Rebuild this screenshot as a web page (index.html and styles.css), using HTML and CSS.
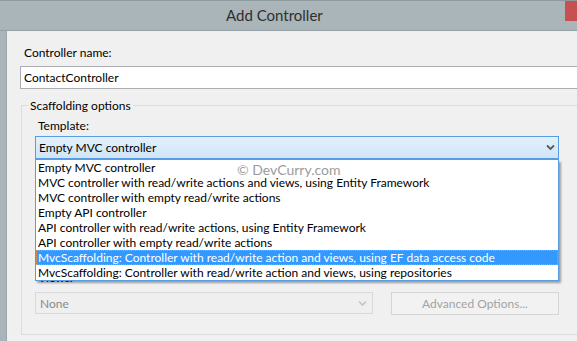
FILE: index.html
```html
<!DOCTYPE html>
<html>
<head>
<meta charset="utf-8">
<link rel="stylesheet" href="styles.css">
</head>
<body>
<div class="window">
  <div class="titlebar">
    <span class="title">Add Controller</span>
    <span class="close"></span>
  </div>
  <div class="content">
    <div class="field-label">Controller name:</div>
    <div class="textbox">ContactController</div>
    <fieldset class="group">
      <legend>Scaffolding options</legend>
      <div class="label">Template:</div>
      <div class="combo-wrap">
        <div class="combo open">
          <span>Empty MVC controller</span>
          <svg class="chev" width="9" height="7" viewBox="0 0 9 7"><polyline points="1,1.5 4.5,5 8,1.5" fill="none" stroke="#5a5a5a" stroke-width="1.8"/></svg>
        </div>
        <ul class="dropdown">
          <li>Empty MVC controller</li>
          <li>MVC controller with read/write actions and views, using Entity Framework</li>
          <li>MVC controller with empty read/write actions</li>
          <li>Empty API controller</li>
          <li>API controller with read/write actions, using Entity Framework</li>
          <li>API controller with empty read/write actions</li>
          <li class="selected">MvcScaffolding: Controller with read/write action and views, using EF data access code</li>
          <li>MvcScaffolding: Controller with read/write action and views, using repositories</li>
        </ul>
        <div class="watermark">© DevCurry.com</div>
      </div>
      <div class="label views">Views:</div>
      <div class="row">
        <div class="combo disabled">
          <span>None</span>
          <svg class="chev" width="9" height="7" viewBox="0 0 9 7"><polyline points="1,1.5 4.5,5 8,1.5" fill="none" stroke="#c4c4c4" stroke-width="1.6"/></svg>
        </div>
        <button class="btn" disabled>Advanced Options...</button>
      </div>
    </fieldset>
  </div>
</div>
</body>
</html>
```

FILE: styles.css
```css
html, body {
  margin: 0;
  padding: 0;
}
body {
  width: 577px;
  height: 341px;
  overflow: hidden;
  font-family: Lato, "Open Sans", sans-serif;
  font-size: 12px;
  color: #000;
  background: #aab5ba;
}
.window {
  height: 341px;
  box-sizing: border-box;
  background: #aab5ba;
  border-top: 1px solid #8e999e;
}
.titlebar {
  height: 29px;
  border-bottom: 1px solid #96a1a6;
  display: flex;
  align-items: flex-start;
}
.title {
  margin-left: 226px;
  margin-top: 5px;
  font-size: 15px;
  line-height: 19px;
  color: #2e2e2e;
}
.close {
  margin-left: auto;
  width: 12px;
  height: 20px;
  background: #c75050;
}
.content {
  margin-left: 6px;
  border-left: 1px solid #9ba6ab;
  background: #f0f0f0;
  width: 640px;
  height: 310px;
  box-sizing: border-box;
  padding: 14px 0 0 13px;
}
.field-label {
  line-height: 15px;
  margin-left: 4px;
}
.textbox {
  margin-top: 6px;
  height: 23px;
  box-sizing: border-box;
  width: 620px;
  background: #fff;
  border: 1px solid #abadb3;
  padding-left: 3px;
  line-height: 21px;
}
.group {
  margin: 9px 0 0 1px;
  padding: 0 30px 19px 13px;
  border: 1px solid #dcdcdc;
  min-inline-size: 0;
  width: 530px;
}
.group legend {
  margin-left: -7px;
  padding: 0 2px;
  line-height: 15px;
}
.label {
  line-height: 15px;
  margin-left: 3px;
}
.group > .label:first-of-type {
  margin-top: 5px;
}
.combo-wrap {
  position: relative;
  margin-top: 3px;
  width: 524px;
}
.combo {
  display: flex;
  align-items: center;
  justify-content: space-between;
  box-sizing: border-box;
  padding: 0 3px 0 3px;
}
.combo.open {
  height: 24px;
  border: 1px solid #569de5;
  border-bottom-width: 2px;
  background: linear-gradient(#e4f0fb, #cfe5f8);
}
.chev {
  display: block;
}
.dropdown {
  position: absolute;
  left: 0;
  top: 24px;
  width: 524px;
  box-sizing: border-box;
  margin: 0;
  padding: 0;
  list-style: none;
  background: #fff;
  border: 1px solid #569de5;
  border-top: none;
  box-shadow: 2px 2px 2px rgba(0, 0, 0, 0.35);
  z-index: 2;
}
.dropdown li {
  height: 15px;
  line-height: 15px;
  padding-left: 2px;
  white-space: nowrap;
  box-sizing: border-box;
}
.dropdown li.selected {
  background: #3399ff;
  color: #fff;
  outline: 1px dotted #e09a5a;
  outline-offset: -1px;
}
.watermark {
  position: absolute;
  left: 202px;
  top: 26px;
  font-size: 14px;
  line-height: 16px;
  color: #9c9c9c;
  z-index: 3;
}
.views {
  margin-top: 110px;
}
.row {
  display: flex;
  margin-top: 7px;
  gap: 18px;
  width: 524px;
}
.combo.disabled {
  width: 338px;
  height: 22px;
  border: 1px solid #d9d9d9;
  background: #efefef;
  color: #8a8a8a;
  padding: 0 5px 0 4px;
}
.btn {
  width: 168px;
  height: 23px;
  box-sizing: border-box;
  border: 1px solid #d5d5d5;
  background: #f2f2f2;
  color: #a3a3a3;
  font: inherit;
  padding: 0;
}
```
